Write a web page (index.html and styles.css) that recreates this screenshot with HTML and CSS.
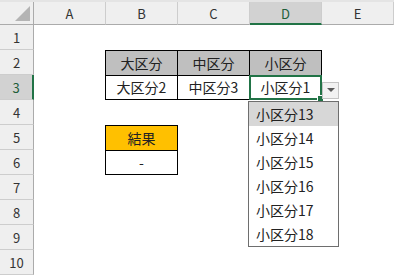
FILE: index.html
```html
<!DOCTYPE html>
<html lang="ja">
<head>
    <meta charset="UTF-8">
    <title>入力規則 ドロップダウン</title>
    <link rel="stylesheet" href="styles.css">
</head>
<body>
    <div class="strip"></div>
    <div class="sheet">
        <div class="corner"><span class="tri"></span></div>
        <div class="ch">A</div>
        <div class="ch">B</div>
        <div class="ch">C</div>
        <div class="ch active-col">D</div>
        <div class="ch">E</div>

        <div class="rh">1</div>
        <div class="rh">2</div>
        <div class="rh active-row">3</div>
        <div class="rh">4</div>
        <div class="rh">5</div>
        <div class="rh">6</div>
        <div class="rh">7</div>
        <div class="rh">8</div>
        <div class="rh">9</div>
        <div class="rh">10</div>

        <div class="table">
            <div class="cell head">大区分</div>
            <div class="cell head">中区分</div>
            <div class="cell head">小区分</div>
            <div class="cell">大区分2</div>
            <div class="cell">中区分3</div>
            <div class="cell selected">
                小区分1
                <span class="handle"></span>
                <span class="drop-btn"><span class="arrow"></span></span>
                <ul class="drop-list">
                    <li class="hover">小区分13</li>
                    <li>小区分14</li>
                    <li>小区分15</li>
                    <li>小区分16</li>
                    <li>小区分17</li>
                    <li>小区分18</li>
                </ul>
            </div>
        </div>

        <div class="result">
            <div class="cell orange">結果</div>
            <div class="cell">-</div>
        </div>
    </div>
</body>
</html>
```

FILE: styles.css
```css
body {
    margin: 0;
    background: #fff;
    font-family: "Noto Sans CJK JP", "Noto Sans", sans-serif;
    color: #222;
    overflow: hidden;
}

.strip {
    height: 2px;
    background: #e4e4e4;
}

.sheet {
    display: grid;
    grid-template-columns: 34px repeat(5, 72px);
    grid-template-rows: 23px repeat(10, 25px);
}

.corner,
.ch,
.rh {
    box-sizing: border-box;
    background: #efefef;
    display: flex;
    align-items: center;
    justify-content: center;
    font-size: 13px;
    color: #333;
}

.corner {
    border-right: 1px solid #ababab;
    border-bottom: 1px solid #ababab;
    justify-content: flex-end;
    align-items: flex-end;
    padding: 0 3px 3px 0;
}

.tri {
    width: 15px;
    height: 15px;
    background: #b4b4b4;
    clip-path: polygon(100% 0, 100% 100%, 0 100%);
}

.ch {
    border-right: 1px solid #cdcdcd;
    border-bottom: 1px solid #ababab;
    padding-top: 1px;
}

.rh {
    grid-column: 1;
    border-right: 1px solid #ababab;
    border-bottom: 1px solid #cdcdcd;
}

.active-col {
    background: #d2d2d2;
    border-bottom: 2px solid #217346;
    color: #1e5e3a;
}

.active-row {
    background: #d2d2d2;
    border-right: 2px solid #217346;
    color: #1e5e3a;
}

.table,
.result {
    display: grid;
    gap: 1px;
    padding: 1px;
    background: #000;
    margin: 0 0 0 -1px;
}

.table {
    grid-column: 3 / 6;
    grid-row: 3 / 5;
    grid-template-columns: repeat(3, 1fr);
}

.result {
    grid-column: 3;
    grid-row: 6 / 8;
}

.cell {
    background: #fff;
    display: flex;
    align-items: center;
    justify-content: center;
    font-size: 14px;
    color: #222;
}

.head {
    background: #bfbfbf;
}

.orange {
    background: #ffc000;
}

.selected {
    position: relative;
    outline: 2px solid #217346;
    outline-offset: -1px;
    z-index: 1;
}

.handle {
    position: absolute;
    right: -3px;
    bottom: -3px;
    width: 5px;
    height: 5px;
    background: #217346;
    border: 1px solid #fff;
}

.drop-btn {
    position: absolute;
    left: calc(100% + 1px);
    top: 6px;
    width: 17px;
    height: 17px;
    box-sizing: border-box;
    background: #f2f2f2;
    border: 1px solid #c4c4c4;
    display: flex;
    align-items: center;
    justify-content: center;
}

.arrow {
    width: 0;
    height: 0;
    border-left: 4px solid transparent;
    border-right: 4px solid transparent;
    border-top: 4px solid #5a5a5a;
}

.drop-list {
    position: absolute;
    top: calc(100% + 2px);
    left: -2px;
    width: 91px;
    margin: 0;
    padding: 0;
    list-style: none;
    background: #fff;
    border: 1px solid #6e6e6e;
    box-sizing: border-box;
}

.drop-list li {
    height: 24px;
    line-height: 24px;
    padding-left: 7px;
    font-size: 14px;
    color: #222;
}

.drop-list .hover {
    background: #d7d7d7;
}
```
